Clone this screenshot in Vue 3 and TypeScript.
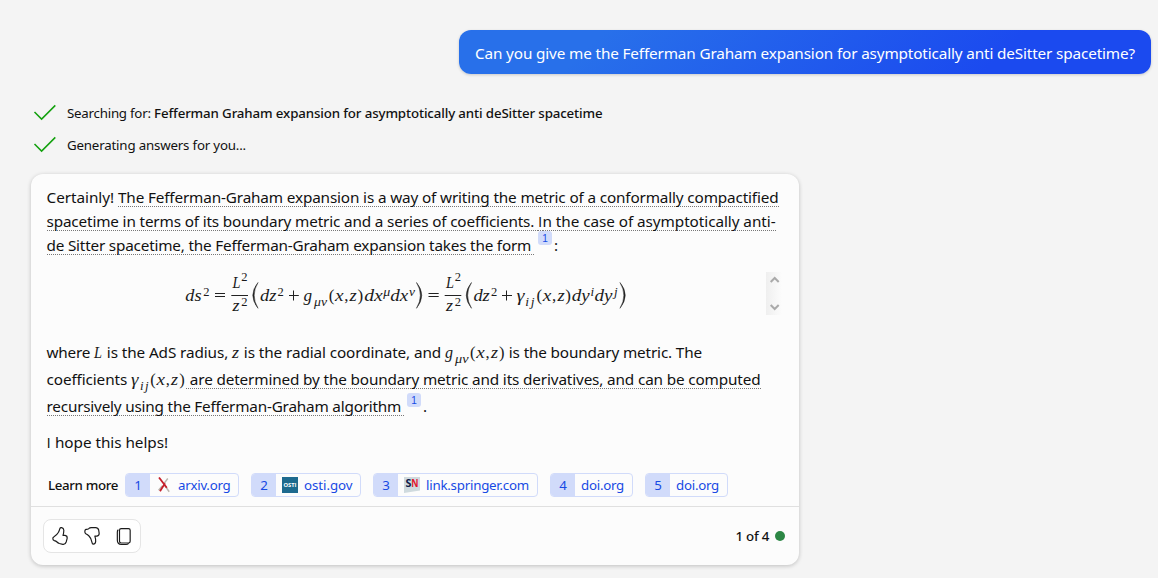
<script setup lang="ts">
import type { Directive } from 'vue'

interface Glyph { t: string; x: number; y: number; w?: number; s?: number; up?: boolean }
interface Seg { t?: string; w: number; u?: boolean; alt?: string; math?: Glyph[] }
interface Source { n: number; host: string; w: number; text: number; icon?: string }

// Spreads letters evenly so a run of text occupies the given advance width.
const vFit: Directive<HTMLElement, number> = {
  mounted(el, { value }) {
    const range = document.createRange()
    range.selectNodeContents(el)
    const natural = range.getBoundingClientRect().width
    const count = (el.textContent ?? '').length
    if (count) el.style.letterSpacing = `${(value - natural) / count}px`
    el.style.width = `${value}px`
  },
}

const intro: Seg[][] = [
  [{ t: 'Certainly! ', w: 71.5 }, { t: 'The Fefferman-Graham expansion is a way of writing the metric of a conformally compactified', w: 660.5, u: true }],
  [{ t: 'spacetime in terms of its boundary metric and a series of coefficients. ', w: 491.5, u: true }, { alt: 'I', w: 4.5, u: true }, { t: 'n the case of asymptotically anti-', w: 233, u: true }],
  [{ t: 'de Sitter spacetime, the Fefferman-Graham expansion takes the form ', w: 488.5, u: true }],
]

const gArgs: Glyph[] = [
  { t: 'g', x: 0, y: 19, w: 8 }, { t: 'μν', x: 10, y: 23.5, w: 13.5, s: 12 },
  { t: '(', x: 25, y: 19, up: true }, { t: 'x', x: 31.2, y: 19, w: 8.5 }, { t: ',', x: 40.5, y: 19, up: true },
  { t: 'z', x: 46, y: 19, w: 7 }, { t: ')', x: 54, y: 19, up: true },
]
const gammaArgs: Glyph[] = [
  { t: 'γ', x: 0, y: 19, w: 7.5 }, { t: 'i', x: 9, y: 23.5, s: 13 }, { t: 'j', x: 14, y: 23.5, s: 13 },
  { t: '(', x: 19.3, y: 19, up: true }, { t: 'x', x: 25.5, y: 19, w: 8.5 }, { t: ',', x: 34.7, y: 19, up: true },
  { t: 'z', x: 40, y: 19, w: 7 }, { t: ')', x: 48.3, y: 19, up: true },
]

const detail: Seg[][] = [
  [
    { t: 'where ', w: 47.5 }, { w: 9, math: [{ t: 'L', x: 0, y: 19, w: 8 }] },
    { t: ' is the AdS radius, ', w: 129 }, { w: 8, math: [{ t: 'z', x: 0, y: 19, w: 7 }] },
    { t: ' is the radial coordinate, and ', w: 205 }, { w: 60, math: gArgs },
    { t: ' is the boundary metric. The', w: 197 },
  ],
  [{ t: 'coefficients ', w: 84.5 }, { w: 55, math: gammaArgs }, { t: ' are determined by the boundary metric and its derivatives, and can be computed', w: 574.5, u: true }],
  [{ t: 'recursively using the Fefferman-Graham algorithm ', w: 358.5, u: true }],
]

const formula: Glyph[] = [
  { t: 'ds', x: 185.3, y: 300.5, w: 16.2 }, { t: '2', x: 203.2, y: 295.5, s: 12.5, up: true },
  { t: 'L', x: 232.5, y: 288, w: 8 }, { t: '2', x: 241.3, y: 281, s: 12.5, up: true },
  { t: 'z', x: 232.5, y: 310.5, w: 7 }, { t: '2', x: 241.3, y: 306, s: 12.5, up: true },
  { t: 'dz', x: 260, y: 300.5, w: 16.4 }, { t: '2', x: 277.6, y: 295.5, s: 12.5, up: true },
  { t: 'g', x: 303.5, y: 300.5, w: 8.6 }, { t: 'μν', x: 314, y: 305.5, w: 13, s: 12.5 },
  { t: '(', x: 328.7, y: 300.5, up: true }, { t: 'x', x: 335, y: 300.5, w: 8.6 }, { t: ',', x: 344.3, y: 300.5, up: true },
  { t: 'z', x: 349.5, y: 300.5, w: 7.2 }, { t: ')', x: 357.4, y: 300.5, up: true },
  { t: 'dx', x: 364.2, y: 300.5, w: 18.6 }, { t: 'μ', x: 383.3, y: 295.5, w: 7, s: 12.5 },
  { t: 'dx', x: 390.2, y: 300.5, w: 18 }, { t: 'ν', x: 409, y: 295.5, w: 6, s: 12.5 },
  { t: 'L', x: 446, y: 288, w: 8 }, { t: '2', x: 454.7, y: 281, s: 12.5, up: true },
  { t: 'z', x: 446, y: 310.5, w: 7 }, { t: '2', x: 454.7, y: 306, s: 12.5, up: true },
  { t: 'dz', x: 473.4, y: 300.5, w: 16.4 }, { t: '2', x: 490.9, y: 295.5, s: 12.5, up: true },
  { t: 'γ', x: 516.5, y: 300.5, w: 8 }, { t: 'i', x: 525.3, y: 305.5, s: 13.5 }, { t: 'j', x: 530.7, y: 305.5, s: 13.5 },
  { t: '(', x: 536.4, y: 300.5, up: true }, { t: 'x', x: 542.7, y: 300.5, w: 8.6 }, { t: ',', x: 552, y: 300.5, up: true },
  { t: 'z', x: 557.4, y: 300.5, w: 7.2 }, { t: ')', x: 565.3, y: 300.5, up: true },
  { t: 'dy', x: 571.8, y: 300.5, w: 18 }, { t: 'i', x: 590.6, y: 295.5, s: 13 },
  { t: 'dy', x: 594.4, y: 300.5, w: 18 }, { t: 'j', x: 614, y: 295.5, s: 13 },
]

const sources: Source[] = [
  { n: 1, host: 'arxiv.org', w: 114, text: 52.5, icon: 'arxiv' },
  { n: 2, host: 'osti.gov', w: 110, text: 48.5, icon: 'osti' },
  { n: 3, host: 'link.springer.com', w: 165, text: 103, icon: 'sn' },
  { n: 4, host: 'doi.org', w: 83, text: 43 },
  { n: 5, host: 'doi.org', w: 83, text: 43 },
]
</script>

<template>
  <main class="page">
    <div class="ask"><span v-fit="660" class="seg">Can you give me the Fefferman Graham expansion for asymptotically anti deSitter spacetime?</span></div>

    <div class="status">
      <svg class="check" viewBox="0 0 24 20"><path d="M1.5 9 8.6 16.1 22.3 2.4" /></svg>
      <span v-fit="87" class="seg">Searching for: </span><b v-fit="448.5" class="seg semi">Fefferman Graham expansion for asymptotically anti deSitter spacetime</b>
    </div>
    <div class="status">
      <svg class="check" viewBox="0 0 24 20"><path d="M1.5 9 8.6 16.1 22.3 2.4" /></svg>
      <span v-fit="179" class="seg">Generating answers for you...</span>
    </div>

    <article class="card">
      <div class="body">
        <div v-for="(line, i) in intro" :key="i" class="line">
          <span v-for="(s, j) in line" :key="j" v-fit="s.w" class="seg" :class="{ cited: s.u, plain: s.alt }">{{ s.alt ?? s.t }}</span>
          <template v-if="i === 2"><sup class="badge first">1</sup><span class="seg">:</span></template>
        </div>

        <svg class="formula" viewBox="46 266 736 52">
          <defs>
            <linearGradient id="track"><stop offset="0" stop-color="#efefef" /><stop offset="1" stop-color="#fcfcfc" /></linearGradient>
          </defs>
          <text
            v-for="(g, i) in formula" :key="i" :x="g.x" :y="g.y" :font-size="g.s ?? 17" :textLength="g.w"
            lengthAdjust="spacingAndGlyphs" :class="g.up ? 'up' : 'it'"
          >{{ g.t }}</text>
          <path class="rule" d="M231.3 295.5H248M444.7 295.5H461.3M215 293.5H225M215 296.5H225M428.5 293.5H438.7M428.5 296.5H438.7M289 295.5H298.8M293.5 290.5V300.5M502 295.5H512M506.500 290.5V300.5" />
          <path class="paren" d="M258 282.5Q247.5 295.3 258 308.3Q250.3 295.3 258 282.5ZM416.5 282.5Q427 295.3 416.5 308.3Q424.2 295.3 416.5 282.5ZM471.5 282.5Q461 295.3 471.5 308.3Q463.8 295.3 471.5 282.5ZM620 282.5Q630.5 295.3 620 308.3Q627.7 295.3 620 282.5Z" />
          <rect x="766" y="272" width="16" height="43" fill="url(#track)" />
          <path class="arrow" d="M770.7 282 774.7 278 778.7 282M770.7 305 774.7 309 778.7 305" />
        </svg>

        <div v-for="(line, i) in detail" :key="i" class="line tall">
          <template v-for="(s, j) in line" :key="j">
            <svg v-if="s.math" class="math" :width="s.w" height="27">
              <text
                v-for="(g, k) in s.math" :key="k" :x="g.x" :y="g.y" :font-size="g.s ?? 16.5" :textLength="g.w"
                lengthAdjust="spacingAndGlyphs" :class="g.up ? 'up' : 'it'"
              >{{ g.t }}</text>
            </svg>
            <span v-else v-fit="s.w" class="seg" :class="{ cited: s.u }">{{ s.t }}</span>
          </template>
          <template v-if="i === 2"><sup class="badge">1</sup><span class="seg">.</span></template>
        </div>

        <div class="line closing"><span v-fit="4.5" class="seg plain">I</span><span v-fit="117" class="seg"> hope this helps!</span></div>

        <div class="sources">
          <b v-fit="70" class="seg semi more">Learn more</b>
          <a v-for="s in sources" :key="s.n" class="chip" :style="{ width: s.w + 'px' }">
            <span class="num">{{ s.n }}</span>
            <svg v-if="s.icon === 'arxiv'" class="fav" viewBox="0 0 16 16">
              <path d="M11.8 1.5 8.3 6.1M6.2 9 2.6 13.200M8.5 8 13.2 14.8" stroke="#bdb6ae" stroke-width="1.5" fill="none" />
              <path d="M3 .5 10.8 10.800M9 6.2 4 14.3" stroke="#c5202b" stroke-width="1.8" fill="none" />
            </svg>
            <svg v-else-if="s.icon === 'osti'" class="fav" viewBox="0 0 16 16">
              <rect width="16" height="16" fill="#1d6a8e" />
              <text x="1.5" y="10.3" font-size="6" textLength="13" lengthAdjust="spacingAndGlyphs" class="logo" fill="#fff">OSTI</text>
            </svg>
            <svg v-else-if="s.icon === 'sn'" class="fav" viewBox="0 0 16 16">
              <path d="M0 0H16V13.5L0 16Z" fill="#cfdade" />
              <text x="1.5" y="10.2" font-size="10" textLength="5.900" lengthAdjust="spacingAndGlyphs" class="logo" fill="#10204b">S</text>
              <text x="7.3" y="10.2" font-size="10" textLength="7.2" lengthAdjust="spacingAndGlyphs" class="logo" fill="#e3132c">N</text>
            </svg>
            <span v-fit="s.text" class="seg host">{{ s.host }}</span>
          </a>
        </div>
      </div>

      <footer class="foot">
        <div class="actions">
          <svg viewBox="54 191 72 72"><path d="M89.5 205Q90.500 201.500 95 202Q101 203 101.500 210Q101.500 217 99 225H105Q112.500 226 111.500 234L108.500 245Q106 253 98.500 252L88 249.500Q84 248 81 245Q78 242 73 241Q68.500 239.500 68.500 235.500Q68 231 72 229Q81 224 85.500 216Q88 211 89.500 205Z" /></svg>
          <svg viewBox="151 191 72 72"><path d="M169 207Q173 207.500 177 205Q180 202.500 185 202H198Q205 202 207 209L208.500 219Q209 226 202 227.500H195.500Q198.500 236 198 244Q197 251.500 191 251.500Q187.500 251 187 246Q185 234 178 227Q174 223 168.500 220.500Q165 218 165.500 212Q166 208 169 207Z" /></svg>
          <svg viewBox="247 191 72 72"><rect x="269.500" y="205" width="32" height="43" rx="5" /><path d="M265 209Q263 211 263 216V240Q263 252 275 252.500H289Q294 252.500 296 250" /></svg>
        </div>
        <div class="turns"><b v-fit="33.5" class="seg count">1 of 4</b><i class="dot"></i></div>
      </footer>
    </article>
  </main>
</template>

<style>
body { background: #f4f4f4; }
</style>

<style scoped>
.page {
  box-sizing: border-box; width: 1158px; height: 578px; padding: 30px 7px 0 31px; overflow: hidden;
  background: #f4f4f4; color: #111; display: flex; flex-direction: column; align-items: flex-start;
  font: 15.3px/24px "Noto Sans", "Open Sans", sans-serif;
}
.seg { display: inline-block; white-space: pre; flex: none; }
.ask {
  align-self: flex-end; box-sizing: border-box; width: 692px; height: 44px; padding: 11px 16px 9px; border-radius: 12px;
  color: #fff; background: linear-gradient(137deg, #2870ea 20%, #1b4aef 77%);
  box-shadow: 0 1px 3px rgba(0, 0, 0, .18);
}
.status { display: flex; align-items: center; height: 32px; font-size: 13.3px; padding-left: 2px; }
.ask + .status { margin-top: 23px; }
.semi { font-weight: 550; }
.count { font-weight: 500; }
.check { width: 24px; height: 20px; margin-right: 10px; fill: none; stroke: #13a10e; stroke-width: 1.5; }
.card {
  box-sizing: border-box; width: 768px; height: 391px; margin-top: 13px; border-radius: 12px;
  background: #fcfcfc; box-shadow: 0 1px 4px rgba(0, 0, 0, .22);
}
.body { box-sizing: border-box; height: 332px; padding: 11px 0 0 15.5px; }
.line { display: flex; height: 24px; align-items: flex-start; }
.tall { height: 27px; line-height: 26px; }
.cited {
  background: repeating-linear-gradient(90deg, #777 0 1px, transparent 1px 2px) 0 21px / 100% 1px no-repeat;
}
.tall .cited { background-position: 0 22px; height: 27px; }
.plain { font-family: "Open Sans", sans-serif; }
.badge {
  width: 14px; height: 14px; margin: 0 2px 0 2px; border-radius: 3px; background: #d1dbfa; color: #174ae4;
  font: 10px/15px "Liberation Sans", Arial, sans-serif; text-align: center;
}
.badge.first { margin-top: -2px; margin-left: 3px; }
.formula { display: block; width: 736px; height: 52px; margin: 9px 0 21px -.5px; }
.math { overflow: visible; flex: none; }
.it, .up { font-family: "Liberation Serif", serif; fill: #1a1a1a; }
.it { font-style: italic; }
.rule { stroke: #222; stroke-width: 1; fill: none; }
.paren { fill: #222; stroke: #222; stroke-width: .5; }
.arrow { fill: none; stroke: #aaa; stroke-width: 2; }
.closing { margin-top: 10px; }
.sources { display: flex; align-items: center; height: 24px; margin-top: 19px; padding-left: 1.5px; font-size: 13.3px; gap: 12px; }
.more { margin-right: -5px; }
.chip {
  box-sizing: border-box; height: 24px; display: flex; align-items: center; flex: none; overflow: hidden;
  border: 1px solid #d1dbfa; border-radius: 4px; color: #174ae4;
}
.num { width: 24px; height: 22px; line-height: 23px; text-align: center; background: #d1dbfa; flex: none; }
.fav { width: 16px; height: 16px; margin-left: 6px; flex: none; }
.host { margin-left: 6px; }
.logo { font-family: "Open Sans", sans-serif; font-weight: 700; }
.foot {
  box-sizing: border-box; height: 59px; border-top: 1px solid #e0e0e0; padding: 12px 14px 12px 12px;
  display: flex; align-items: center; justify-content: space-between;
}
.actions {
  box-sizing: border-box; width: 98px; height: 34px; border: 1px solid #e5e5e5; border-radius: 8px; background: #fff;
  display: flex; align-items: center; justify-content: center; gap: 8px;
}
.actions svg { width: 24px; height: 24px; fill: none; stroke: #1b1b1b; stroke-width: 3.5; stroke-linejoin: round; stroke-linecap: round; }
.turns { display: flex; align-items: center; gap: 6px; font-size: 13.3px; }
.dot { width: 10px; height: 10px; border-radius: 50%; background: #2c8745; }
</style>
